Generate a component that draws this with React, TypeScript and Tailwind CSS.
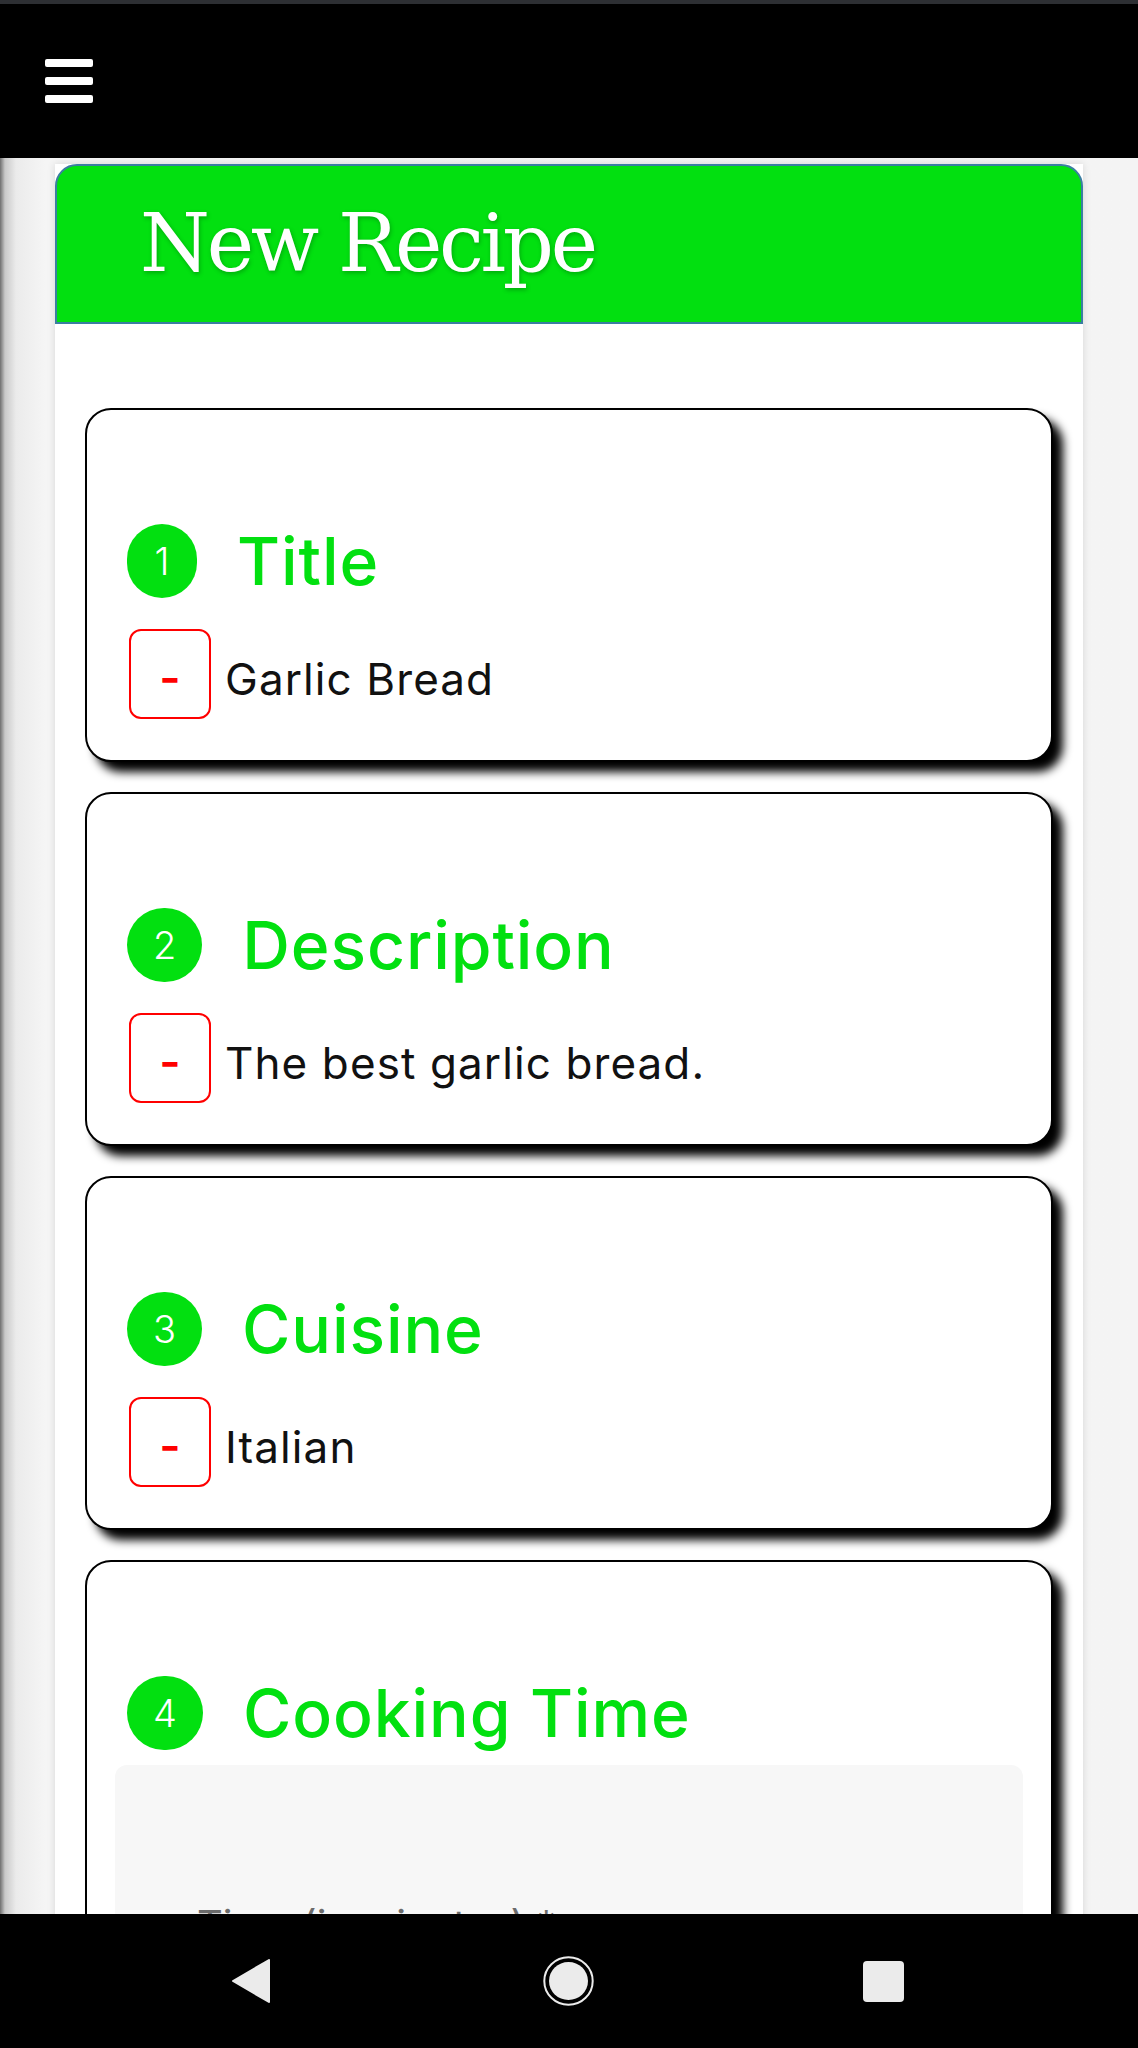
import React from "react";

type Item = { n: string; title: string; value?: string };

const items: Item[] = [
  { n: "1", title: "Title", value: "Garlic Bread" },
  { n: "2", title: "Description", value: "The best garlic bread." },
  { n: "3", title: "Cuisine", value: "Italian" },
];

function StepHeader({ n, title }: { n: string; title: string }) {
  return (
    <div className="flex items-center">
      <div className="h-[74px] min-w-[70px] px-[26px] rounded-full bg-[#02e010] flex items-center justify-center text-white text-[38px] font-light leading-none">
        {n}
      </div>
      <div className="ml-[40px] text-[#02e010] text-[66px] font-medium leading-none tracking-[0.9px]">
        {title}
      </div>
    </div>
  );
}

function Card({ item }: { item: Item }) {
  return (
    <div className="h-[354px] shrink-0 border-2 border-black rounded-[26px] bg-white shadow-[10px_10px_10px_#000] pt-[114px] pl-[40px]">
      <StepHeader n={item.n} title={item.title} />
      <div className="mt-[31px] flex items-center">
        <div className="ml-[2px] w-[82px] h-[90px] border-[2.5px] border-[#ff0000] rounded-[12px] flex items-center justify-center text-[#ff0000] text-[46px] font-semibold leading-none pt-[6px]">
          -
        </div>
        <div className="ml-[14px] pt-[10px] text-[#111] text-[44px] font-normal leading-none tracking-[1.1px]">
          {item.value}
        </div>
      </div>
    </div>
  );
}

export default function App() {
  return (
    <div className="w-[1138px] h-[2048px] overflow-hidden flex flex-col bg-white font-['Inter',sans-serif]">
      <div className="h-[4px] shrink-0 bg-[#2d2f33]" />
      <header className="h-[154px] shrink-0 bg-black pl-[45px] pt-[55px]">
        <div className="w-[48px] flex flex-col gap-[10px]">
          <div className="h-[8px] rounded-[2px] bg-white" />
          <div className="h-[8px] rounded-[2px] bg-white" />
          <div className="h-[8px] rounded-[2px] bg-white" />
        </div>
      </header>
      <main className="flex-1 overflow-hidden pt-[6px] pl-[55px] bg-[linear-gradient(to_right,#6f6f6f_0px,#c9c9c9_5px,#ebebeb_16px,#f5f5f5_45px,#f4f4f4_100%)]">
        <div className="w-[1028px] h-[2000px] bg-white shadow-[0_0_8px_rgba(0,0,0,0.12)]">
          <div className="h-[160px] bg-[#02e010] border-2 border-[#3b7ea1] rounded-t-[22px] pl-[83px] flex items-center">
            <h1 className="font-['DejaVu_Serif',serif] text-white text-[80px] leading-none tracking-[-3.3px] [text-shadow:1px_2px_4px_rgba(0,0,0,0.25)]">
              New Recipe
            </h1>
          </div>
          <div className="px-[30px] pt-[84px] flex flex-col gap-[30px]">
            {items.map((it) => (
              <Card key={it.n} item={it} />
            ))}
            <div className="h-[600px] shrink-0 border-2 border-black rounded-[26px] bg-white shadow-[10px_10px_10px_#000] pt-[114px]">
              <div className="pl-[40px]">
                <StepHeader n="4" title="Cooking Time" />
              </div>
              <div className="mt-[15px] px-[28px]">
                <div className="h-[400px] rounded-[12px] bg-[#f7f7f7] pl-[82px] pt-[140px] text-[40px] leading-none text-[#6b6b6b]">
                  Time (in minutes) *
                </div>
              </div>
            </div>
          </div>
        </div>
      </main>
      <nav className="h-[134px] shrink-0 bg-black flex items-center pl-[231px]">
        <svg width="40" height="44" viewBox="0 0 40 44" className="shrink-0">
          <path d="M38 1 L38 43 L2 22 Z" fill="#ebebeb" stroke="#ebebeb" strokeWidth="2" strokeLinejoin="round" />
        </svg>
        <svg width="51" height="50" viewBox="0 0 51 50" className="ml-[272px] shrink-0">
          <ellipse cx="25.5" cy="25" rx="24.2" ry="23.8" fill="none" stroke="#ebebeb" strokeWidth="2" />
          <ellipse cx="25.5" cy="25" rx="19.5" ry="19" fill="#ebebeb" />
        </svg>
        <div className="ml-[269px] w-[41px] h-[41px] rounded-[4px] bg-[#ebebeb] shrink-0" />
      </nav>
    </div>
  );
}
